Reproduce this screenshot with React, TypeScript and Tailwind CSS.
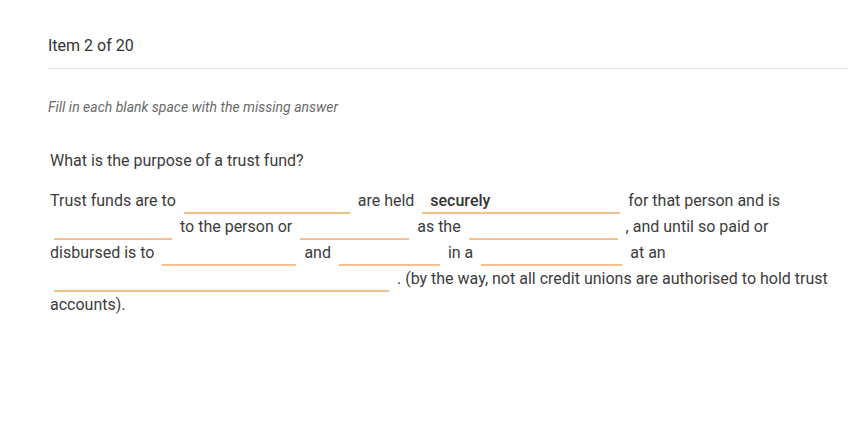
import React from 'react';

// Blank input slot with an orange underline
const Blank = ({ w, value }: { w: string; value?: string }) => (
  <span
    className={`mx-1 inline-block border-b-2 border-[#f6c08e] px-2 pb-[1px] align-baseline font-medium leading-[20px] text-[#333] ${w}`}
  >
    {value ?? '\u00a0'}
  </span>
);

export default function App() {
  return (
    <div className="min-h-[440px] bg-white font-['Roboto',sans-serif] text-[#3a3a3a]">
      <div className="ml-12 w-[800px] pt-[35px]">
        <div className="border-b border-[#e3e3e3] pb-[11px] text-[16px] leading-[22px] text-[#333]">
          Item 2 of 20
        </div>
        <p className="mt-[28px] text-[14px] italic leading-[20px] text-[#6b6b6b]">
          Fill in each blank space with the missing answer
        </p>
        <div className="ml-[2px] mt-[33px] text-[16px] text-[#3c3c3c]">
          <p className="leading-[22px]">What is the purpose of a trust fund?</p>
          <p className="mt-[16px] w-[785px] leading-[25.5px]">
            Trust funds are to <Blank w="w-[166px]" /> are held{' '}
            <Blank w="w-[198px]" value="securely" /> for that person and is{' '}
            <Blank w="w-[118px]" /> to the person or <Blank w="w-[109px]" /> as the{' '}
            <Blank w="w-[149px]" /> , and until so paid or disbursed is to{' '}
            <Blank w="w-[134px]" /> and <Blank w="w-[101px]" /> in a{' '}
            <Blank w="w-[141px]" /> at an <Blank w="w-[335px]" /> . (by the way, not all
            credit unions are authorised to hold trust accounts).
          </p>
        </div>
      </div>
    </div>
  );
}
